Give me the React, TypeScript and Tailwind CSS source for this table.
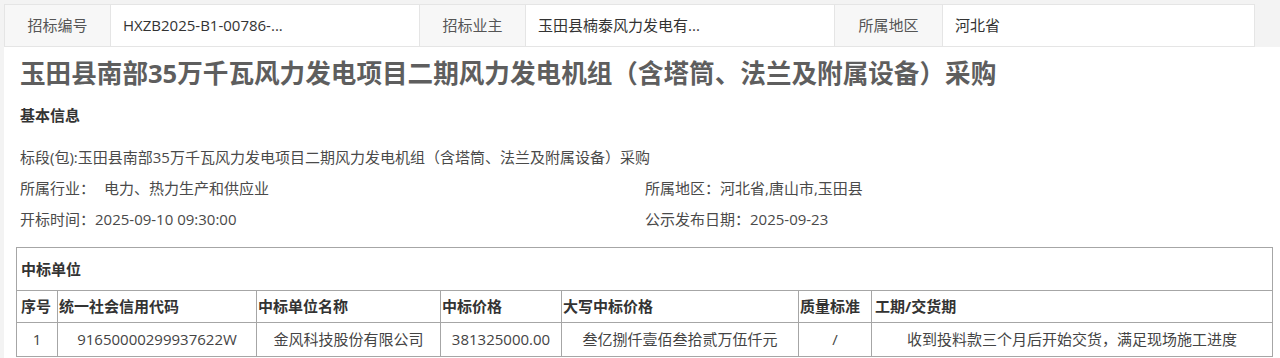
import React from "react";

const font = { fontFamily: '"Open Sans", "Noto Sans CJK SC", sans-serif' };

export default function App() {
  return (
    <div
      className="w-[1280px] h-[358px] overflow-hidden bg-[#f3f3f3] pt-[4px] pl-[4px] text-[15px] text-[#4a4a4a]"
      style={font}
    >
      {/* top info bar */}
      <div className="grid grid-cols-[106px_309px_106px_309px_108px_313px] h-[43px] w-[1251px] border border-[#e5e5e5] bg-white">
        <div className="flex items-center justify-center bg-[#f7f7f7] border-r border-[#e5e5e5] text-[#555]">招标编号</div>
        <div className="flex items-center pl-[12px] border-r border-[#e5e5e5] text-[#333]">HXZB2025-B1-00786-...</div>
        <div className="flex items-center justify-center bg-[#f7f7f7] border-r border-[#e5e5e5] text-[#555]">招标业主</div>
        <div className="flex items-center pl-[12px] border-r border-[#e5e5e5] text-[#333]">玉田县楠泰风力发电有...</div>
        <div className="flex items-center justify-center bg-[#f7f7f7] border-r border-[#e5e5e5] text-[#555]">所属地区</div>
        <div className="flex items-center pl-[12px] text-[#333]">河北省</div>
      </div>

      {/* content */}
      <div className="bg-white pl-[16px] pr-[8px] pt-[10px] h-[311px]">
        <h1 className="text-[25.6px] leading-[34px] font-bold text-[#5e5e5e]">
          玉田县南部35万千瓦风力发电项目二期风力发电机组（含塔筒、法兰及附属设备）采购
        </h1>
        <div className="mt-[13px] leading-[22px] font-bold text-[#333]">基本信息</div>
        <div className="mt-[16px] grid grid-cols-[625px_1fr]">
          <div className="col-span-2 h-[31px] flex items-center">
            标段(包):玉田县南部35万千瓦风力发电项目二期风力发电机组（含塔筒、法兰及附属设备）采购
          </div>
          <div className="h-[31px] flex items-center">
            所属行业：<span className="ml-[9px]">电力、热力生产和供应业</span>
          </div>
          <div className="h-[31px] flex items-center">所属地区：河北省,唐山市,玉田县</div>
          <div className="h-[31px] flex items-center">开标时间：2025-09-10 09:30:00</div>
          <div className="h-[31px] flex items-center">公示发布日期：2025-09-23</div>
        </div>

        <table className="mt-[12px] -ml-[4px] w-[1256px] table-fixed border-collapse text-[#333]">
          <colgroup>
            <col className="w-[41px]" />
            <col className="w-[199px]" />
            <col className="w-[184px]" />
            <col className="w-[121px]" />
            <col className="w-[237px]" />
            <col className="w-[73px]" />
            <col className="w-[401px]" />
          </colgroup>
          <tbody>
            <tr className="h-[43px]">
              <td colSpan={7} className="border border-[#a6a6a6] pl-[4px] font-bold text-left">
                中标单位
              </td>
            </tr>
            <tr className="h-[32px] font-bold text-left">
              <td className="border border-[#a6a6a6] pl-[4px] whitespace-nowrap">序号</td>
              <td className="border border-[#a6a6a6] pl-[1px]">统一社会信用代码</td>
              <td className="border border-[#a6a6a6] pl-[1px]">中标单位名称</td>
              <td className="border border-[#a6a6a6] pl-[1px]">中标价格</td>
              <td className="border border-[#a6a6a6] pl-[1px]">大写中标价格</td>
              <td className="border border-[#a6a6a6] pl-[1px] whitespace-nowrap">质量标准</td>
              <td className="border border-[#a6a6a6] pl-[3px]">工期/交货期</td>
            </tr>
            <tr className="h-[34px] text-center text-[#444]">
              <td className="border border-[#a6a6a6]">1</td>
              <td className="border border-[#a6a6a6]">91650000299937622W</td>
              <td className="border border-[#a6a6a6]">金风科技股份有限公司</td>
              <td className="border border-[#a6a6a6]">381325000.00</td>
              <td className="border border-[#a6a6a6]">叁亿捌仟壹佰叁拾贰万伍仟元</td>
              <td className="border border-[#a6a6a6]">/</td>
              <td className="border border-[#a6a6a6]">收到投料款三个月后开始交货，满足现场施工进度</td>
            </tr>
          </tbody>
        </table>
      </div>
    </div>
  );
}
